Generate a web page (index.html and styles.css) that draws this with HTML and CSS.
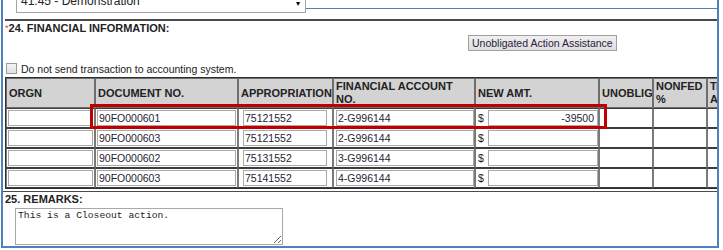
FILE: index.html
```html
<!DOCTYPE html>
<html lang="en">
<head>
    <meta charset="UTF-8">
    <title>Financial Information</title>
    <link rel="stylesheet" href="styles.css">
</head>
<body>

<div class="frame">
    <div class="top-strip">
        <div class="select-stub">
            <span class="select-text">41.45 - Demonstration</span>
            <span class="select-arrow">&#9662;</span>
        </div>
        <div class="strip-line"></div>
    </div>

    <div class="section">
        <div class="section-title"><span class="req">*</span>24. FINANCIAL INFORMATION:</div>
        <div class="btn-row">
            <button class="btn">Unobligated Action Assistance</button>
        </div>
        <label class="check-row">
            <input type="checkbox" class="check">
            <span>Do not send transaction to accounting system.</span>
        </label>

        <table class="fin-table">
            <tr>
                <th class="c-orgn">ORGN</th>
                <th class="c-doc">DOCUMENT NO.</th>
                <th class="c-appr">APPROPRIATION</th>
                <th class="c-fin">FINANCIAL ACCOUNT<br>NO.</th>
                <th class="c-amt">NEW AMT.</th>
                <th class="c-unob">UNOBLIG</th>
                <th class="c-nonfed">NONFED<br>%</th>
                <th class="c-trans">Tr<br>A</th>
            </tr>
            <tr>
                <td><input class="in in-orgn" value=""></td>
                <td><input class="in in-doc" value="90FO000601"></td>
                <td><input class="in in-appr" value="75121552"></td>
                <td><input class="in in-fin" value="2-G996144"></td>
                <td><span class="dollar">$</span><input class="in in-amt" value="-39500"></td>
                <td></td>
                <td></td>
                <td></td>
            </tr>
            <tr>
                <td><input class="in in-orgn" value=""></td>
                <td><input class="in in-doc" value="90FO000603"></td>
                <td><input class="in in-appr" value="75121552"></td>
                <td><input class="in in-fin" value="2-G996144"></td>
                <td><span class="dollar">$</span><input class="in in-amt" value=""></td>
                <td></td>
                <td></td>
                <td></td>
            </tr>
            <tr>
                <td><input class="in in-orgn" value=""></td>
                <td><input class="in in-doc" value="90FO000602"></td>
                <td><input class="in in-appr" value="75131552"></td>
                <td><input class="in in-fin" value="3-G996144"></td>
                <td><span class="dollar">$</span><input class="in in-amt" value=""></td>
                <td></td>
                <td></td>
                <td></td>
            </tr>
            <tr>
                <td><input class="in in-orgn" value=""></td>
                <td><input class="in in-doc" value="90FO000603"></td>
                <td><input class="in in-appr" value="75141552"></td>
                <td><input class="in in-fin" value="4-G996144"></td>
                <td><span class="dollar">$</span><input class="in in-amt" value=""></td>
                <td></td>
                <td></td>
                <td></td>
            </tr>
        </table>
    </div>

    <div class="remarks">
        <div class="section-title">25. REMARKS:</div>
        <textarea class="remarks-box">This is a Closeout action.</textarea>
    </div>

    <!-- red annotation box around the first row -->
    <div class="highlight"></div>
</div>

</body>
</html>
```

FILE: styles.css
```css
body {
    margin: 0;
    background: #fff;
    font-family: "Liberation Sans", Arial, sans-serif;
    font-size: 10.5px;
    color: #222;
}

.frame {
    position: relative;
    width: 714px;
    height: 246px;
    margin-left: 1px;
    border-left: 2px solid #4f81bd;
    border-right: 2px solid #4f81bd;
    border-bottom: 2px solid #4f81bd;
    overflow: hidden;
}

.top-strip {
    display: flex;
    height: 19px;
    margin-left: 2px;
    border-bottom: 2px solid #4a4a4a;
}

.select-stub {
    position: relative;
    width: 288px;
    height: 12px;
    margin-left: 11px;
    border: 1px solid #a5a5a5;
    border-top: none;
    overflow: hidden;
    background: #fff;
}

.select-text {
    display: block;
    margin-top: -6px;
    padding-left: 4px;
    line-height: 14px;
    font-size: 12px;
}

.select-arrow {
    position: absolute;
    right: 5px;
    top: 0;
    font-size: 8px;
    line-height: 8px;
    color: #000;
}

.strip-line {
    flex: 1;
    margin-top: 8px;
    height: 0;
    border-top: 1px solid #4f81bd;
}

.section {
    padding-left: 2px;
}

.section-title {
    margin-top: 1px;
    line-height: 13px;
    font-weight: bold;
    font-size: 11px;
}

.req {
    color: #d33;
    font-weight: normal;
    font-size: 9px;
    vertical-align: top;
}

.btn-row {
    height: 16px;
}

.btn {
    height: 16px;
    margin-left: 463px;
    padding: 0 3px;
    border: 1px solid #a0a0a0;
    border-radius: 0;
    background: linear-gradient(#f0f0f0, #dedede);
    font-family: "Liberation Sans", Arial, sans-serif;
    font-size: 10.5px;
    color: #2a2140;
    line-height: 14px;
}

.check-row {
    display: flex;
    align-items: center;
    height: 13px;
    margin-top: 11px;
}

.check {
    appearance: none;
    width: 11px;
    height: 11px;
    margin: 0 4px 0 1px;
    border: 1px solid #9a9a9a;
    background: linear-gradient(#f4f4f4, #e2e2e2);
}

.fin-table {
    table-layout: fixed;
    width: 763px;
    margin-top: 2px;
    border-collapse: separate;
    border-spacing: 0;
    border: 1px solid #2e2e2e;
}

.fin-table th,
.fin-table td {
    box-sizing: border-box;
    border: 1px solid #6e6e6e;
    padding: 0 1px;
    vertical-align: middle;
    white-space: nowrap;
    overflow: hidden;
}

.fin-table th {
    height: 30px;
    background: #d3d3d3;
    text-align: left;
    font-weight: bold;
    font-size: 11px;
    line-height: 13px;
    padding-left: 2px;
}

.fin-table td {
    height: 20px;
    border-color: #3c3c3c #7a7a7a;
}

.c-orgn { width: 89px; }
.c-doc { width: 143px; }
.c-appr { width: 95px; }
.c-fin { width: 142px; }
.c-amt { width: 124px; }
.c-unob { width: 54px; }
.c-nonfed { width: 54px; }
.c-trans { width: 60px; }

.in {
    box-sizing: border-box;
    display: inline-block;
    height: 16px;
    margin: 0;
    padding: 0 1px;
    border: 1px solid #a9a9a9;
    vertical-align: middle;
    font-family: "Liberation Sans", Arial, sans-serif;
    font-size: 10.5px;
    color: #1f2333;
}

.in-orgn { width: 85px; }
.in-doc { width: 139px; }
.in-appr { width: 84px; margin-left: 3px; }
.in-fin { width: 138px; margin-left: 1px; }
.in-amt { width: 110px; padding-right: 3px; text-align: right; }

.dollar {
    display: inline-block;
    width: 10px;
    padding-left: 1px;
    vertical-align: middle;
    font-size: 10.5px;
}

.remarks {
    margin-top: 2px;
    padding-left: 2px;
    border-top: 1px solid #4a4a4a;
}

.remarks .section-title {
    margin-top: 1px;
    line-height: 12px;
}

.remarks-box {
    display: block;
    box-sizing: border-box;
    width: 268px;
    height: 37px;
    margin: 3px 0 0 10px;
    padding: 1px 2px;
    border: 1px solid #a9a9a9;
    resize: both;
    font-family: "Liberation Mono", "Courier New", monospace;
    font-size: 9.7px;
    color: #222;
}

.highlight {
    position: absolute;
    left: 87px;
    top: 104px;
    width: 517px;
    height: 25px;
    box-sizing: border-box;
    border: 3px solid #c00000;
}
```
